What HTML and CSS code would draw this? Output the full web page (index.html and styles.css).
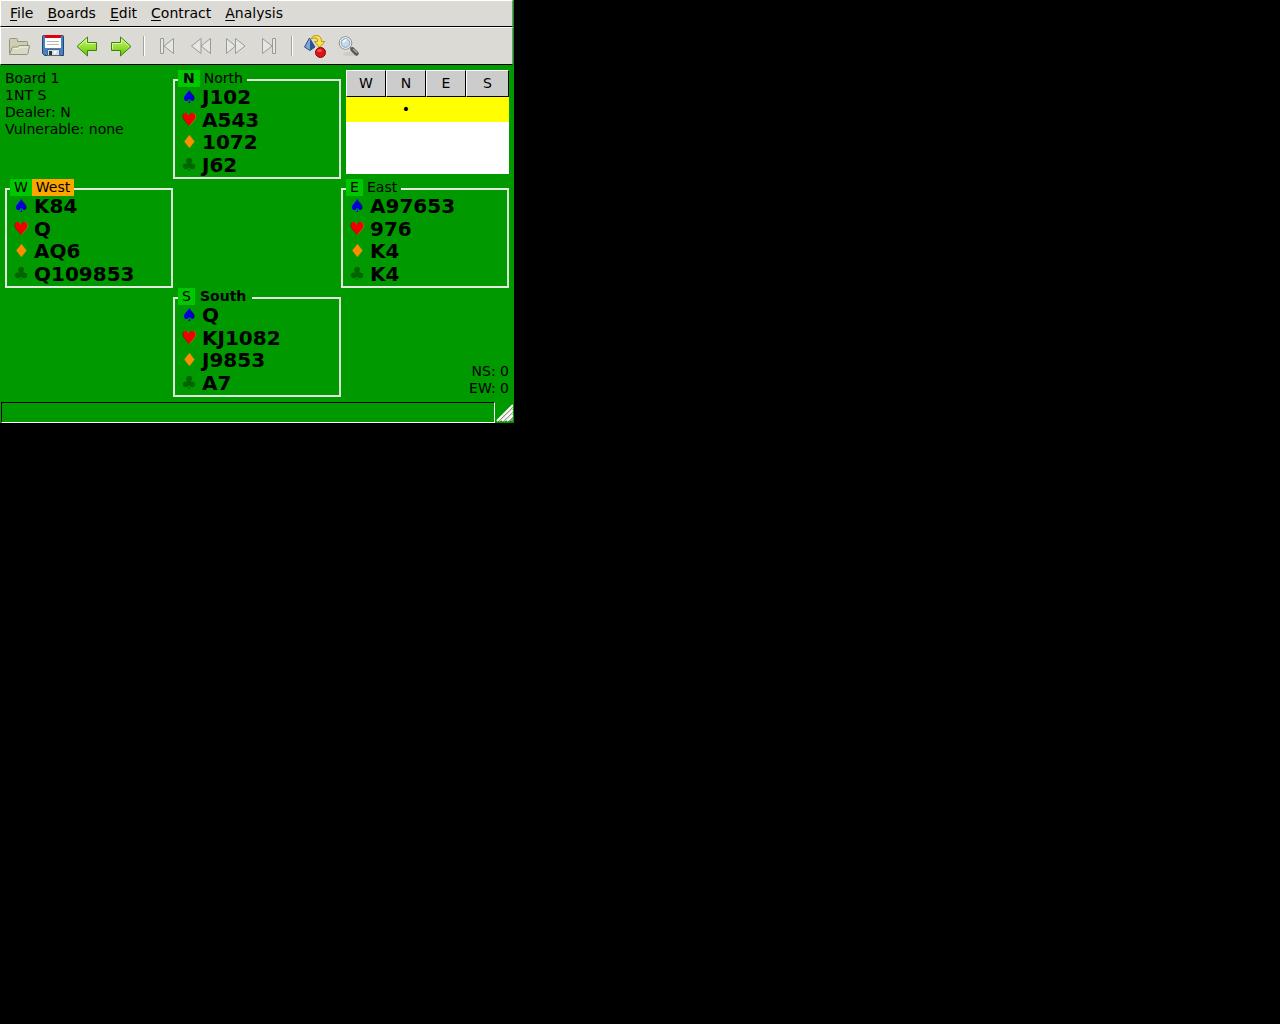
FILE: index.html
```html
<!DOCTYPE html>
<html lang="en">
<head>
<meta charset="utf-8">
<title>Bridge board</title>
<link rel="stylesheet" href="styles.css">
</head>
<body>
<div class="window">
  <nav class="menubar">
    <button class="menu"><u>F</u>ile</button>
    <button class="menu"><u>B</u>oards</button>
    <button class="menu"><u>E</u>dit</button>
    <button class="menu"><u>C</u>ontract</button>
    <button class="menu"><u>A</u>nalysis</button>
  </nav>
  <div class="toolbar" role="toolbar">
    <button class="tool" aria-label="Open"><svg viewBox="0 0 24 24"><path d="M2.500 19.500v-14q0-1 1-1h6q1 0 1 1v2h9q1 0 1 1v4" fill="#cfceb4" stroke="#93937c"/><path d="M2.500 20.500l3-7.500h5l1.500-1.500h10.500l-1.500 8q-.3 1-1.300 1z" fill="#d9d9c3" stroke="#93937c"/><path d="M6.500 14.500h5l1.300-1.500h8" fill="none" stroke="#efefdf"/></svg></button>
    <button class="tool" aria-label="Save"><svg viewBox="0 0 24 24"><path d="M2.500 1.500h19q1 0 1 1v19h-19l-2-2v-17q0-1 1-1z" fill="#4a7fc0" stroke="#1f4678"/><path d="M4 1h16v13H4z" fill="#fff"/><path d="M4 1h16v3H4z" fill="#e00010"/><path d="M6 7.500h12M6 10.500h12" stroke="#b5b5b5"/><path d="M6.500 15.500h12v6h-12z" fill="#d8dcd8" stroke="#52687f"/><path d="M8 17h3v4H8z" fill="#25364c"/><path d="M13 17l3 0-3 4z" fill="#fff"/></svg></button>
    <button class="tool" aria-label="Previous board"><svg viewBox="0 0 24 24"><defs><linearGradient id="leaf" x2="0" y2="1"><stop offset="0" stop-color="#c2f27e"/><stop offset=".5" stop-color="#9be038"/><stop offset="1" stop-color="#65bd10"/></linearGradient></defs><path d="M2 12.500L12.500 3v5.500h9v8h-9V22z" fill="url(#leaf)" stroke="#3f8409" stroke-linejoin="round"/><path d="M3.700 12.300l7.700-7v4.200h9" fill="none" stroke="#d7f7a2"/></svg></button>
    <button class="tool" aria-label="Next board"><svg viewBox="0 0 24 24"><path d="M22 12.500L11.500 3v5.500h-9v8h9V22z" fill="url(#leaf)" stroke="#3f8409" stroke-linejoin="round"/><path d="M3.500 15v-5.500h9V5.300l7.500 7" fill="none" stroke="#d7f7a2"/></svg></button>
    <span class="separator"></span>
    <button class="tool" aria-label="First card"><svg class="line" viewBox="0 0 24 24"><path d="M5.500 4.500h3v15h-3zM18.500 4.500v15L9 12z"/></svg></button>
    <button class="tool" aria-label="Rewind"><svg class="line" viewBox="0 0 24 24"><path d="M12 4.500v15L2.500 12zM21.500 4.500v15L12 12z"/></svg></button>
    <button class="tool" aria-label="Forward"><svg class="line" viewBox="0 0 24 24"><path d="M3.500 4.500v15L12.500 12zM12.500 4.500v15L22 12z"/></svg></button>
    <button class="tool" aria-label="Last card"><svg class="line" viewBox="0 0 24 24"><path d="M5.500 4.500v15L15 12zM15.500 4.500h3v15h-3z"/></svg></button>
    <span class="separator"></span>
    <button class="tool" aria-label="Swap"><svg viewBox="0 0 24 24"><path d="M6.500 4L12 13l-5 3.500L1.500 13z" fill="#7ea6d8" stroke="#274d83" stroke-linejoin="round"/><path d="M7 5l5 8-5 3.500z" fill="#2c5593"/><path d="M7.500 5Q10 .8 14.500 1.500q4.200 1 4 6h3.300l-5.300 6-5-6h3.200q.3-3.500-2.700-3.500-2 .1-4.500 1z" fill="#fbe24c" stroke="#bd9600" stroke-linejoin="round"/><circle cx="17.500" cy="18.500" r="5" fill="#d91515" stroke="#950000"/><ellipse cx="16.500" cy="16.500" rx="2.500" ry="1.500" fill="#ef5555"/></svg></button>
    <button class="tool" aria-label="Find"><svg viewBox="0 0 24 24"><ellipse cx="13" cy="20" rx="7" ry="2" fill="#cdcdc8"/><path d="M13 13l2 2" stroke="#888" stroke-width="2"/><path d="M15.500 15.500l4 4" stroke="#555753" stroke-width="4.500" stroke-linecap="round"/><path d="M16 15l4 4" stroke="#a5a7a2" stroke-width="1.500"/><circle cx="8.500" cy="9" r="6.300" fill="#dbe8f3" stroke="#8b8d89"/><circle cx="8.500" cy="9" r="5.200" fill="none" stroke="#f4f4f4"/><circle cx="8.500" cy="9" r="4.300" fill="#c6dbea" stroke="#8ba0b5"/><path d="M5.500 8q1-3 5-3-2 3-5 4z" fill="#f4f9fd"/></svg></button>
  </div>

  <main class="table-area">
    <section class="info">
      <div>Board 1</div>
      <div>1NT S</div>
      <div>Dealer: N</div>
      <div>Vulnerable: none</div>
    </section>

    <fieldset class="hand north">
      <legend><b class="seat">N</b><span class="player">North</span></legend>
      <ul class="cards">
        <li><span class="suit spades">♠</span>J102</li>
        <li><span class="suit hearts">♥</span>A543</li>
        <li><span class="suit diamonds">♦</span>1072</li>
        <li><span class="suit clubs">♣</span>J62</li>
      </ul>
    </fieldset>

    <table class="tricks">
      <thead><tr><th>W</th><th>N</th><th>E</th><th>S</th></tr></thead>
      <tbody>
        <tr class="current"><td></td><td>•</td><td></td><td></td></tr>
        <tr class="rest"><td colspan="4"></td></tr>
      </tbody>
    </table>

    <fieldset class="hand west">
      <legend><span class="seat">W</span><span class="player on-turn">West</span></legend>
      <ul class="cards">
        <li><span class="suit spades">♠</span>K84</li>
        <li><span class="suit hearts">♥</span>Q</li>
        <li><span class="suit diamonds">♦</span>AQ6</li>
        <li><span class="suit clubs">♣</span>Q109853</li>
      </ul>
    </fieldset>

    <fieldset class="hand east">
      <legend><span class="seat">E</span><span class="player">East</span></legend>
      <ul class="cards">
        <li><span class="suit spades">♠</span>A97653</li>
        <li><span class="suit hearts">♥</span>976</li>
        <li><span class="suit diamonds">♦</span>K4</li>
        <li><span class="suit clubs">♣</span>K4</li>
      </ul>
    </fieldset>

    <fieldset class="hand south">
      <legend><span class="seat">S</span><b class="player">South</b></legend>
      <ul class="cards">
        <li><span class="suit spades">♠</span>Q</li>
        <li><span class="suit hearts">♥</span>KJ1082</li>
        <li><span class="suit diamonds">♦</span>J9853</li>
        <li><span class="suit clubs">♣</span>A7</li>
      </ul>
    </fieldset>

    <section class="score">
      <div>NS: 0</div>
      <div>EW: 0</div>
    </section>
  </main>

  <footer class="statusbar">
    <div class="status"></div>
    <svg class="grip" viewBox="0 0 17 19"><path d="M1 18L17 2v16z" fill="#8f8f86"/><path d="M1 18L17 2M6 18L17 7M11 18l6-6" stroke="#fff" stroke-width="2"/><path d="M3.500 18.500L17 5M8.500 18.500L17 10" stroke="#e2d6cf"/></svg>
  </footer>
</div>
</body>
</html>
```
FILE: styles.css
```css
* {
  box-sizing: border-box;
}

body {
  margin: 0;
  background: #000;
  color: #000;
  font: 14px/17px "DejaVu Sans", sans-serif;
}

.window {
  width: 514px;
  max-width: 100%;
  background: #009900;
}

button {
  margin: 0;
  border: 0;
  background: none;
  color: inherit;
  font: inherit;
}

/* Raised bars */
.menubar,
.toolbar {
  display: flex;
  align-items: center;
  margin-right: 1px;
  border: 1px solid;
  border-color: #fff #888 #000 #fff;
  background: #dcdad5;
}

.menubar {
  height: 27px;
  padding: 0 2px;
}

.menu {
  padding: 0 7px;
}

.menu u {
  text-underline-offset: 2px;
}

.toolbar {
  height: 38px;
  padding: 0 1px;
}

.tool {
  width: 34px;
  height: 32px;
  padding: 4px 5px;
}

.tool svg {
  display: block;
  width: 24px;
  height: 24px;
}

.line {
  fill: #e6e6e2;
  stroke: #999b96;
  stroke-linejoin: round;
}

.separator {
  width: 2px;
  height: 20px;
  margin: 0 5px;
  border-left: 1px solid #a5a39e;
  border-right: 1px solid #fff;
}

/* Playing table */
.table-area {
  display: grid;
  grid-template-columns: repeat(3, 1fr);
  grid-template-rows: repeat(3, 109px);
  grid-template-areas:
    "info north tricks"
    "west . east"
    ". south score";
  padding: 5px;
}

.info { grid-area: info; }
.north { grid-area: north; }
.west { grid-area: west; }
.east { grid-area: east; }
.south { grid-area: south; }

.score {
  grid-area: score;
  align-self: end;
  text-align: right;
}

.hand {
  min-width: 0;
  margin: 0;
  padding: 0 3px;
  border: 2px solid;
  border-color: #e4e9df #d9e3d3 #e4e9df #e4e9df;
}

.hand legend {
  display: flex;
  align-items: flex-start;
  height: 20px;
  padding: 0;
}

.seat {
  min-width: 17px;
  padding: 0 4px;
  background: #00c800;
}

b.seat {
  padding: 0 5px;
}

.player {
  padding: 0 4px;
}

b.player {
  padding: 0 6px 0 5px;
}

.on-turn {
  background: #ffa500;
}

.cards {
  display: grid;
  grid-template-rows: repeat(4, 1fr);
  align-items: center;
  height: 90px;
  margin: -4px 0 0;
  padding: 0 2px;
  list-style: none;
  font-size: 20px;
  font-weight: bold;
  line-height: 22px;
}

.cards li {
  display: flex;
}

.suit {
  width: 22px;
  padding-left: 1px;
  font-size: 18px;
  font-weight: normal;
}

.spades { color: #0000d2; }
.hearts { color: #f00000; }
.diamonds { color: #ff8c00; }
.clubs { color: #006400; }

.tricks {
  grid-area: tricks;
  align-self: start;
  margin-left: 5px;
  border-collapse: separate;
  border-spacing: 0;
  table-layout: fixed;
  background: #fff;
}

.tricks th {
  width: 40px;
  height: 27px;
  padding: 0;
  border: 1px solid;
  border-color: #fff #000 #000 #fff;
  background: #ccc;
  font-weight: normal;
}

.tricks th:last-child {
  width: 43px;
}

.tricks td {
  height: 25px;
  padding: 0;
  text-align: center;
}

.current {
  background: #ff0;
}

.tricks .rest td {
  height: 52px;
}

/* Status line */
.statusbar {
  display: flex;
  gap: 1px;
  height: 21px;
  padding: 0 1px;
}

.status {
  flex: 1;
  border: 1px solid;
  border-color: #000 #fff #fff #000;
}

.grip {
  width: 17px;
  height: 21px;
}
```
